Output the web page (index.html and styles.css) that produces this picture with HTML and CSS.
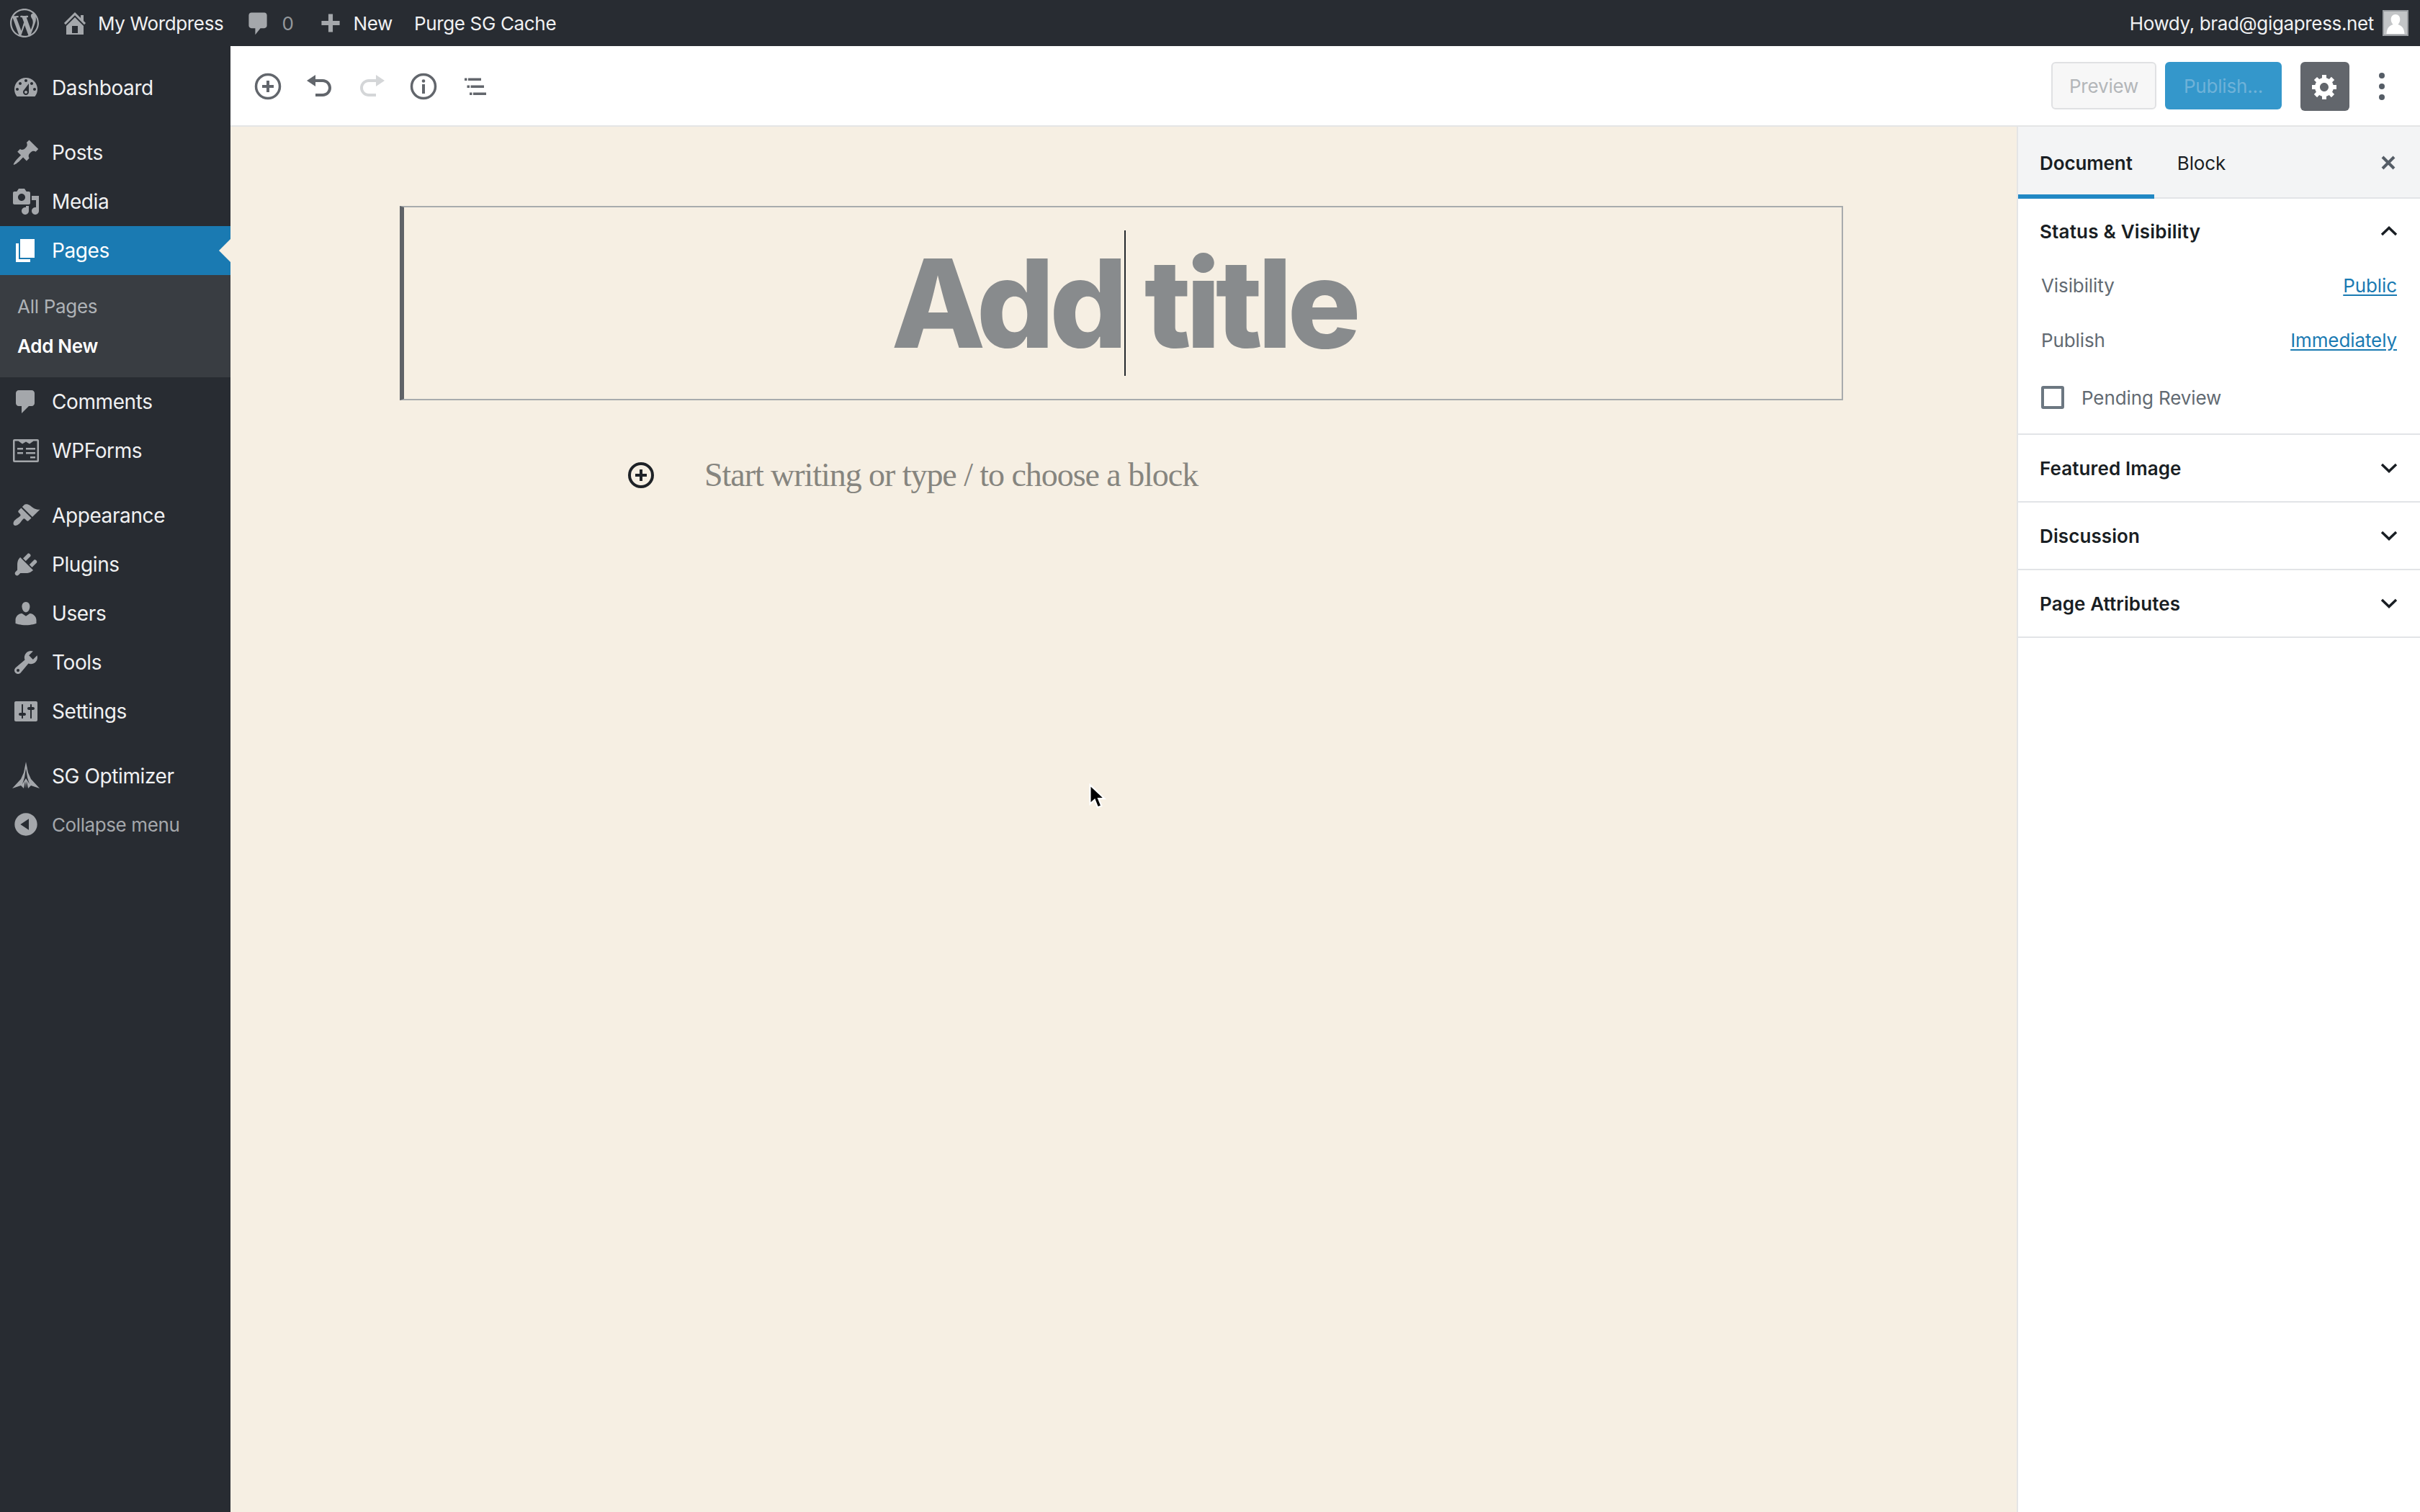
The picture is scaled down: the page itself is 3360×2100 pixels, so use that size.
FILE: index.html
```html
<!DOCTYPE html>
<html lang="en">
<head>
<meta charset="utf-8">
<title>Add New Page</title>
<link rel="stylesheet" href="styles.css">
</head>
<body>
<header class="adminbar">
  <div class="ab-group">
    <svg class="ab-logo" viewBox="0 0 20 20"><path d="M20 10c0-5.51-4.49-10-10-10C4.48 0 0 4.49 0 10c0 5.52 4.48 10 10 10 5.51 0 10-4.48 10-10zM7.78 15.37L4.37 6.22c.55-.02 1.17-.08 1.17-.08.5-.06.44-1.13-.06-1.11 0 0-1.45.11-2.37.11-.18 0-.37 0-.58-.01C4.12 2.69 6.87 1.11 10 1.11c2.33 0 4.45.87 6.05 2.34-.68-.11-1.65.39-1.65 1.58 0 .74.45 1.36.9 2.1.35.61.55 1.36.55 2.46 0 1.49-1.4 5-1.4 5l-3.03-8.37c.54-.02.82-.17.82-.17.5-.05.44-1.25-.06-1.22 0 0-1.44.12-2.38.12-.87 0-2.33-.12-2.33-.12-.5-.03-.56 1.2-.06 1.22l.92.08 1.26 3.41zM17.41 10c.24-.64.74-1.87.43-4.25.7 1.29 1.05 2.71 1.05 4.25 0 3.29-1.73 6.24-4.4 7.78.97-2.59 1.94-5.2 2.92-7.78zM6.1 18.09C3.12 16.65 1.11 13.53 1.11 10c0-1.3.23-2.48.72-3.59C3.25 10.3 4.67 14.2 6.1 18.09zm4.03-6.63l2.58 6.98c-.86.29-1.76.45-2.71.45-.79 0-1.57-.11-2.29-.33.81-2.38 1.62-4.74 2.42-7.1z"/></svg>
    <svg class="ab-icon ab-home" viewBox="0 0 20 20"><path d="M16 8.5l1.53 1.53-1.06 1.06L10 4.62l-6.47 6.47-1.06-1.06L10 2.5l4 4v-2h2v4zm-6-2.46l6 5.99V18H4v-5.97zM12 17v-5H8v5h4z"/></svg>
    <span class="ab-text ab-site">My Wordpress</span>
    <svg class="ab-icon ab-comment" viewBox="0 0 20 20"><path d="M5 2h10c1.1 0 2 .9 2 2v8c0 1.1-.9 2-2 2h-3l-4 5v-5H5c-1.1 0-2-.9-2-2V4c0-1.1.9-2 2-2z"/></svg>
    <span class="ab-text ab-count">0</span>
    <svg class="ab-icon ab-plus" viewBox="0 0 20 20"><path d="M17 8.3v3.4h-5.3V17H8.3v-5.3H3V8.3h5.3V3h3.4v5.3z"/></svg>
    <span class="ab-text ab-new">New</span>
    <span class="ab-text ab-purge">Purge SG Cache</span>
  </div>
  <div class="ab-group">
    <span class="ab-text">Howdy, brad@gigapress.net</span>
    <svg class="ab-avatar" viewBox="0 0 36 36"><rect width="36" height="36" fill="#c3c5c7"/><path fill="#fff" d="M18 6c4 0 6.300 3 6.300 7 0 3-1.300 5.500-3 7 4 1.500 8.700 3.500 9.200 13H5.500c.5-9.500 5.200-11.500 9.200-13-1.700-1.500-3-4-3-7 0-4 2.300-7 6.300-7z"/><rect x="1" y="1" width="34" height="34" fill="none" stroke="#9a9da1" stroke-width="2"/></svg>
  </div>
</header>

<div class="workspace">
  <nav class="sidebar">
    <a class="menu-item"><svg class="menu-icon" viewBox="0 0 20 20"><path d="M3.760 16h12.480c1.100-1.370 1.760-3.110 1.760-5 0-4.420-3.580-8-8-8s-8 3.580-8 8c0 1.890.66 3.630 1.760 5zM10 4c.55 0 1 .45 1 1s-.45 1-1 1-1-.45-1-1 .45-1 1-1zM6 6c.55 0 1 .45 1 1s-.45 1-1 1-1-.45-1-1 .45-1 1-1zm8 0c.55 0 1 .45 1 1s-.45 1-1 1-1-.45-1-1 .45-1 1-1zm-5.370 5.550L12 7v6c0 1.100-.9 2-2 2s-2-.9-2-2c0-.57.24-1.080.63-1.450zM4 10c.55 0 1 .45 1 1s-.45 1-1 1-1-.45-1-1 .45-1 1-1zm12 0c.55 0 1 .45 1 1s-.45 1-1 1-1-.45-1-1 .45-1 1-1zm-5 3c0-.55-.45-1-1-1s-1 .45-1 1 .45 1 1 1 1-.45 1-1z"/></svg>Dashboard</a>
    <a class="menu-item menu-sep"><svg class="menu-icon" viewBox="0 0 20 20"><path d="M10.440 3.020l1.820-1.820 6.360 6.350-1.830 1.820c-1.050-.68-2.480-.57-3.410.36l-.75.75c-.92.93-1.040 2.350-.35 3.410l-1.830 1.820-2.410-2.410-2.800 2.790c-.42.42-3.380 2.710-3.800 2.290s1.860-3.390 2.280-3.810l2.790-2.790L4.100 9.360l1.830-1.820c1.050.69 2.480.57 3.400-.36l.75-.75c.93-.92 1.050-2.350.36-3.410z"/></svg>Posts</a>
    <a class="menu-item"><svg class="menu-icon" viewBox="0 0 20 20"><path d="M13 11V4c0-.55-.45-1-1-1h-1.670L9 1H5L3.670 3H2c-.55 0-1 .45-1 1v7c0 .55.45 1 1 1h10c.55 0 1-.45 1-1zM7 4.500c1.380 0 2.500 1.120 2.500 2.500S8.380 9.500 7 9.500 4.500 8.380 4.500 7 5.620 4.500 7 4.500zM14 6h5v10.500c0 1.380-1.120 2.500-2.500 2.500S14 17.880 14 16.500s1.120-2.500 2.500-2.500c.17 0 .34.02.5.05V9h-3V6zm-4 8.050V13h2v3.500c0 1.380-1.120 2.500-2.500 2.500S7 17.880 7 16.500 8.120 14 9.500 14c.17 0 .34.02.5.05z"/></svg>Media</a>
    <a class="menu-item menu-current"><svg class="menu-icon" viewBox="0 0 20 20"><path d="M6 15V2h10v13H6zm-1 1h8v2H3V5h2v11z"/></svg>Pages</a>
    <div class="submenu">
      <a class="sub-item">All Pages</a>
      <a class="sub-item sub-current">Add New</a>
    </div>
    <a class="menu-item"><svg class="menu-icon" viewBox="0 0 20 20"><path d="M5 2h9c1.100 0 2 .9 2 2v7c0 1.100-.9 2-2 2h-2l-5 5v-5H5c-1.100 0-2-.9-2-2V4c0-1.100.9-2 2-2z"/></svg>Comments</a>
    <a class="menu-item"><svg class="menu-icon" viewBox="0 0 40 40"><path fill-rule="evenodd" d="M4 4h32a2 2 0 0 1 2 2v28a2 2 0 0 1-2 2H4a2 2 0 0 1-2-2V6a2 2 0 0 1 2-2zm.500 2.500v27h31v-27h-5l-5.500 4-5-3-5 3-5.500-4zM8 16h8v2.500H8zm12 0h13v2.500H20zM8 22h8v2.500H8zm12 0h13v2.500H20zm6 6h7v2.500h-7z"/></svg>WPForms</a>
    <a class="menu-item menu-sep"><svg class="menu-icon" viewBox="0 0 20 20"><path d="M14.480 11.060L7.410 3.990l1.500-1.500c.5-.56 2.300-.47 3.510.32 1.210.8 1.430 1.280 2.910 2.100 1.180.64 2.450 1.260 4.450.85zm-.71.71L6.700 4.700 4.930 6.470c-.39.39-.39 1.020 0 1.410l1.060 1.060c.39.39.39 1.030 0 1.420-.6.6-1.430 1.110-2.210 1.690-.35.26-.7.53-1.010.84C1.430 13.710.96 15.600 1.570 16.500c.61.9 2.590.5 3.920-.83.3-.3.58-.65.84-1 .58-.78 1.090-1.610 1.690-2.210.39-.39 1.030-.39 1.420 0l1.060 1.060c.39.39 1.020.39 1.410 0z"/></svg>Appearance</a>
    <a class="menu-item"><svg class="menu-icon" viewBox="0 0 20 20"><path d="M13.110 4.360L9.870 7.600 8 5.730l3.240-3.240c.35-.34 1.050-.2 1.560.32.52.51.66 1.210.31 1.550zm-8 1.770l.91-1.120 9.010 9.010-1.190.84c-.71.71-2.630 1.160-3.820 1.160H6.140L4.900 17.260c-.59.59-1.540.59-2.120 0-.59-.58-.59-1.530 0-2.120l1.240-1.240v-3.880c0-1.130.4-3.190 1.090-3.890zm7.260 3.970l3.240-3.240c.34-.35 1.040-.21 1.550.31.52.51.66 1.210.31 1.550l-3.240 3.250z"/></svg>Plugins</a>
    <a class="menu-item"><svg class="menu-icon" viewBox="0 0 20 20"><path d="M10 9.250c-2.270 0-2.730-3.440-2.730-3.440C7 4.020 7.820 2 9.970 2c2.160 0 2.980 2.020 2.710 3.810 0 0-.41 3.440-2.680 3.440zm0 2.570L12.720 10c2.390 0 4.520 2.330 4.520 4.530v2.490s-3.650 1.130-7.240 1.130c-3.650 0-7.240-1.130-7.240-1.130v-2.490c0-2.250 1.940-4.480 4.470-4.480z"/></svg>Users</a>
    <a class="menu-item"><svg class="menu-icon" viewBox="0 0 20 20"><path d="M16.680 9.770c-1.340 1.340-3.300 1.670-4.950.99l-5.410 6.520c-.99.99-2.590.99-3.580 0s-.99-2.590 0-3.570l6.520-5.420c-.68-1.650-.35-3.610.99-4.950 1.280-1.280 3.120-1.620 4.720-1.060l-2.890 2.890 2.820 2.820 2.860-2.870c.53 1.580.18 3.390-1.080 4.650zM3.810 16.210c.4.39 1.040.39 1.430 0 .4-.4.4-1.040 0-1.430-.39-.4-1.030-.4-1.430 0-.39.39-.39 1.030 0 1.430z"/></svg>Tools</a>
    <a class="menu-item"><svg class="menu-icon" viewBox="0 0 20 20"><path d="M18 16V4c0-.55-.45-1-1-1H3c-.55 0-1 .45-1 1v12c0 .55.45 1 1 1h14c.55 0 1-.45 1-1zM8 11h1c.55 0 1 .45 1 1s-.45 1-1 1H8v1.500c0 .28-.22.5-.5.5s-.5-.22-.5-.5V13H6c-.55 0-1-.45-1-1s.45-1 1-1h1V5.500c0-.28.22-.5.5-.5s.5.22.5.5V11zm5-2h-1c-.55 0-1-.45-1-1s.45-1 1-1h1V5.500c0-.28.22-.5.5-.5s.5.22.5.5V7h1c.55 0 1 .45 1 1s-.45 1-1 1h-1v5.500c0 .28-.22.5-.5.5s-.5-.22-.5-.5V9z"/></svg>Settings</a>
    <a class="menu-item menu-sep"><svg class="menu-icon" viewBox="0 0 40 40"><path d="M20 0l3 15 4 9 12 13-12-4-4 4-2-10-1 10-1-10-2 10-4-4-12 4 12-13 4-9zm0 9l-2 13-3 9 5-8 5 8-3-9z" fill-rule="evenodd"/></svg>SG Optimizer</a>
    <a class="menu-item menu-collapse"><svg class="menu-icon" viewBox="0 0 20 20"><path d="M10 2.160c4.330 0 7.840 3.510 7.840 7.840s-3.510 7.840-7.840 7.840S2.160 14.330 2.160 10 5.710 2.160 10 2.160zm2 11.720V6.120L6.180 9.970z"/></svg>Collapse menu</a>
  </nav>

  <div class="main">
    <div class="toolbar">
      <div class="tools">
        <button class="tool"><svg viewBox="0 0 40 40"><circle cx="20" cy="20" r="16.500" fill="none" stroke="currentColor" stroke-width="3.500"/><path fill="currentColor" d="M18 12h4v6h6v4h-6v6h-4v-6h-6v-4h6z"/></svg></button>
        <button class="tool"><svg viewBox="0 0 20 20"><path fill="currentColor" d="M12 5H7V2L1 6l6 4V7h5c2.200 0 4 1.800 4 4s-1.800 4-4 4H7v2h5c3.300 0 6-2.700 6-6s-2.700-6-6-6z"/></svg></button>
        <button class="tool tool-off"><svg viewBox="0 0 20 20"><path fill="currentColor" d="M8 5h5V2l6 4-6 4V7H8c-2.200 0-4 1.800-4 4s1.800 4 4 4h5v2H8c-3.300 0-6-2.700-6-6s2.700-6 6-6z"/></svg></button>
        <button class="tool"><svg viewBox="0 0 40 40"><circle cx="20" cy="20" r="16.500" fill="none" stroke="currentColor" stroke-width="3.500"/><circle cx="20" cy="12.500" r="2.300" fill="currentColor"/><rect x="18" y="17" width="4" height="13" fill="currentColor"/></svg></button>
        <button class="tool"><svg viewBox="0 0 40 40"><path fill="currentColor" d="M5 8.500h3.500V12H5zM10 8.500h18V12H10zM8.500 18.500H12V22H8.500zM13.500 18.500h18.500V22H13.500zM12 28.500h3.500V32H12zM17 28.500h18V32H17z"/></svg></button>
      </div>
      <div class="actions">
        <button class="btn btn-preview">Preview</button>
        <button class="btn btn-publish">Publish...</button>
        <button class="btn-gear"><svg viewBox="0 0 20 20"><path fill="#fff" d="M18 12h-2.180c-.17.7-.44 1.350-.81 1.930l1.540 1.540-2.100 2.100-1.540-1.540c-.58.36-1.230.63-1.910.79V19H8v-2.180c-.68-.16-1.330-.43-1.910-.79l-1.540 1.540-2.120-2.120 1.540-1.540c-.36-.58-.63-1.230-.79-1.910H1V9.030h2.170c.16-.7.44-1.350.8-1.940L2.430 5.550l2.100-2.100 1.540 1.540c.58-.37 1.240-.64 1.930-.81V2h3v2.180c.68.16 1.330.43 1.910.79l1.540-1.540 2.120 2.120-1.540 1.540c.36.59.64 1.240.8 1.940H18V12zm-8.500 1.500c1.660 0 3-1.340 3-3s-1.340-3-3-3-3 1.340-3 3 1.340 3 3 3z"/></svg></button>
        <div class="kebab"><i></i><i></i><i></i></div>
      </div>
    </div>

    <div class="content">
      <main class="editor">
        <div class="title-box">
          <div class="title-text"><span class="title-word">Add<i class="caret"></i></span> title</div>
        </div>
        <div class="writer">
          <svg class="inserter" viewBox="0 0 40 40"><circle cx="20" cy="20" r="16" fill="none" stroke="#1e2227" stroke-width="4"/><path fill="#1e2227" d="M18 12h4v6h6v4h-6v6h-4v-6h-6v-4h6z"/></svg>
          <span class="placeholder">Start writing or type / to choose a block</span>
        </div>
      </main>

      <aside class="panel">
        <div class="panel-tabs">
          <span class="tab tab-active">Document</span>
          <span class="tab tab-block">Block</span>
          <svg class="panel-close" viewBox="0 0 20 20"><path d="M2 2l16 16M18 2L2 18" stroke="#555d66" stroke-width="4" fill="none"/></svg>
        </div>
        <section class="section section-open">
          <div class="section-head">Status &amp; Visibility<svg class="chev" viewBox="0 0 24 14"><path d="M2 12L12 2.500 22 12" fill="none" stroke="#191e23" stroke-width="3.500"/></svg></div>
          <div class="row"><span>Visibility</span><a class="link">Public</a></div>
          <div class="row"><span>Publish</span><a class="link">Immediately</a></div>
          <div class="row row-check"><i class="checkbox"></i><span>Pending Review</span></div>
        </section>
        <section class="section">
          <div class="section-head">Featured Image<svg class="chev" viewBox="0 0 24 14"><path d="M2 2l10 9.500L22 2" fill="none" stroke="#191e23" stroke-width="3.500"/></svg></div>
        </section>
        <section class="section">
          <div class="section-head">Discussion<svg class="chev" viewBox="0 0 24 14"><path d="M2 2l10 9.500L22 2" fill="none" stroke="#191e23" stroke-width="3.500"/></svg></div>
        </section>
        <section class="section">
          <div class="section-head">Page Attributes<svg class="chev" viewBox="0 0 24 14"><path d="M2 2l10 9.500L22 2" fill="none" stroke="#191e23" stroke-width="3.500"/></svg></div>
        </section>
      </aside>
    </div>
  </div>
</div>

<svg class="pointer" viewBox="0 0 24 34"><path d="M3 2v25l6-5.500 4 10 5-2-4-9.500h8z" fill="#000" stroke="#fff" stroke-width="2"/></svg>
</body>
</html>
```
FILE: styles.css
```css
* { box-sizing: border-box; }
html, body { margin: 0; height: 100%; overflow: hidden; }
body {
  display: flex;
  flex-direction: column;
  background: #f6efe3;
  font-family: Inter, "Liberation Sans", sans-serif;
  color: #191e23;
  -webkit-font-smoothing: antialiased;
}
a { color: inherit; text-decoration: none; }
button { font: inherit; border: 0; background: none; padding: 0; }
svg { display: block; flex: none; }

/* admin bar */
.adminbar {
  height: 64px;
  flex: none;
  display: flex;
  justify-content: space-between;
  align-items: center;
  padding: 0 16px 0 14px;
  background: #282c32;
  color: #f0f1f2;
}
.ab-group { display: flex; align-items: center; }
.ab-text { padding-top: 2px; font-size: 26px; letter-spacing: -.35px; line-height: 32px; white-space: nowrap; }
.ab-logo { width: 40px; height: 40px; fill: #a4a7ab; }
.ab-icon { fill: #a4a7ab; }
.ab-home { width: 40px; height: 40px; margin-left: 30px; }
.ab-site { margin-left: 12px; }
.ab-comment { width: 36px; height: 36px; margin-left: 30px; }
.ab-count { margin-left: 15px; color: #94989c; }
.ab-plus { width: 36px; height: 36px; margin-left: 34px; }
.ab-new { margin-left: 13px; }
.ab-purge { margin-left: 30px; }
.ab-avatar { width: 36px; height: 36px; margin-left: 12px; }

/* layout */
.workspace { flex: 1; display: flex; min-height: 0; }
.sidebar {
  width: 320px;
  flex: none;
  padding-top: 24px;
  background: #282c32;
  color: #f0f1f2;
}
.main { flex: 1; display: flex; flex-direction: column; min-width: 0; }
.content { flex: 1; display: flex; min-height: 0; }

/* side menu */
.menu-item {
  position: relative;
  height: 68px;
  display: flex;
  align-items: center;
  gap: 16px;
  padding-left: 16px;
  font-size: 28px;
  letter-spacing: -.4px;
}
.menu-sep { margin-top: 22px; }
.menu-icon { width: 40px; height: 40px; fill: #a4a7ab; }
.menu-current { background: #1a7ab2; color: #fff; }
.menu-current .menu-icon { fill: #fff; }
.menu-current::after {
  content: "";
  position: absolute;
  right: 0;
  top: 50%;
  margin-top: -16px;
  border: 16px solid transparent;
  border-left: 0;
  border-right-color: #f6efe3;
}
.menu-collapse { margin-top: -1px; font-size: 26px; color: #a4a7ab; }
.submenu {
  height: 142px;
  padding-top: 16px;
  background: #393d42;
}
.sub-item {
  display: flex;
  align-items: center;
  height: 55px;
  padding-left: 24px;
  font-size: 26px;
  letter-spacing: -.3px;
  color: #aeb2b6;
}
.sub-current { color: #fff; font-weight: 600; }

/* toolbar */
.toolbar {
  height: 112px;
  flex: none;
  display: flex;
  justify-content: space-between;
  align-items: center;
  padding: 2px 35px 0 32px;
  background: #fff;
  border-bottom: 2px solid #e4e5e6;
}
.tools { display: flex; gap: 32px; }
.tool { width: 40px; height: 40px; color: #62666c; }
.tool svg { width: 40px; height: 40px; }
.tool-off { color: #d4d6d8; }
.actions { display: flex; align-items: flex-start; }
.btn {
  height: 66px;
  border-radius: 6px;
  font-size: 26px;
  letter-spacing: -.2px;
}
.btn-preview { width: 146px; background: #f7f7f7; border: 2px solid #e0e1e3; color: #b3b6b9; }
.btn-publish { width: 162px; margin-left: 12px; background: #3497cb; color: #6fb2d8; }
.btn-gear {
  width: 68px;
  height: 68px;
  margin-left: 26px;
  padding: 13px 14px;
  border-radius: 6px;
  background: #62666c;
}
.btn-gear svg { width: 40px; height: 40px; }
.kebab { align-self: center; display: flex; flex-direction: column; gap: 7px; margin: 0 14px 0 41px; }
.kebab i { width: 8px; height: 8px; border-radius: 50%; background: #555d66; }

/* editor */
.editor { flex: 1; min-width: 0; padding: 110px 241px 0 235px; }
.title-box {
  height: 270px;
  display: flex;
  justify-content: center;
  align-items: center;
  padding-left: 2px;
  border: 2px solid #a8abad;
  border-left: 6px solid #5f6368;
}
.title-text {
  font-family: Inter, "Liberation Sans", sans-serif;
  font-weight: 800;
  font-size: 170px;
  line-height: 200px;
  letter-spacing: -7px;
  color: #888b8d;
  white-space: nowrap;
}
.title-word { position: relative; }
.caret {
  position: absolute;
  top: 2px;
  right: -4px;
  width: 2px;
  height: 202px;
  background: #23282d;
}
.writer {
  display: flex;
  align-items: center;
  gap: 68px;
  margin-top: 79px;
  padding-left: 315px;
  height: 50px;
}
.inserter { width: 40px; height: 40px; }
.placeholder {
  margin-top: -2px;
  font-family: "Liberation Serif", "Times New Roman", serif;
  font-size: 46px;
  color: #86857f;
  letter-spacing: -1.05px;
  white-space: nowrap;
}

/* settings panel */
.panel {
  width: 560px;
  flex: none;
  background: #fff;
  border-left: 2px solid #e4e5e6;
}
.panel-tabs {
  position: relative;
  height: 100px;
  display: flex;
  background: #f3f4f5;
  border-bottom: 2px solid #e2e4e7;
}
.tab {
  height: 100px;
  display: flex;
  align-items: center;
  padding: 0 30px;
  font-size: 26px;
  letter-spacing: -.1px;
}
.tab-block { padding-left: 32px; }
.tab-active { font-weight: 600; border-bottom: 6px solid #2188c4; padding-top: 6px; }
.panel-close { position: absolute; right: 34px; top: 40px; width: 20px; height: 20px; }
.section { border-bottom: 2px solid #e2e4e7; }
.section-head {
  height: 92px;
  display: flex;
  justify-content: space-between;
  align-items: center;
  padding: 0 31px 0 30px;
  font-size: 26px;
  font-weight: 600;
  letter-spacing: .1px;
}
.chev { width: 24px; height: 14px; }
.section-open { height: 328px; }
.section-open .section-head { height: 82px; padding-top: 8px; letter-spacing: .2px; }
.row {
  height: 76px;
  display: flex;
  justify-content: space-between;
  align-items: center;
  padding: 0 32px;
  font-size: 26px;
  letter-spacing: -.1px;
  color: #626a72;
}
.link { color: #1a7ab2; text-decoration: underline; text-underline-offset: 3px; }
.row-check { justify-content: flex-start; gap: 24px; height: 84px; }
.checkbox {
  width: 32px;
  height: 32px;
  border: 4px solid #6c7781;
  border-radius: 3px;
}

/* mouse pointer */
.pointer { position: absolute; left: 1510px; top: 1088px; width: 26px; height: 36px; }
```
